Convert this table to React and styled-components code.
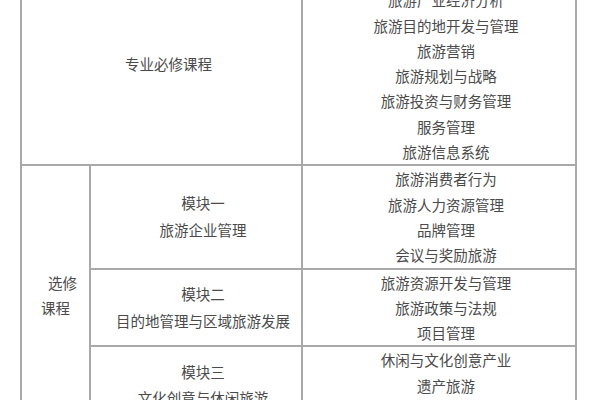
import React from "react";
import styled, { createGlobalStyle } from "styled-components";

const GlobalStyle = createGlobalStyle`
  html, body {
    margin: 0;
    padding: 0;
    background: #fff;
    overflow: hidden;
  }
  body {
    font-family: "Noto Sans CJK SC", "Noto Sans", sans-serif;
  }
`;

const Page = styled.div`
  width: 600px;
  height: 400px;
  overflow: hidden;
  background: #fff;
`;

const Table = styled.table`
  margin: -40px 0 0 20px;
  width: 557px;
  table-layout: fixed;
  border-collapse: collapse;
  border: 2px solid #a9a9a9;
`;

const Cell = styled.td`
  border: 2px solid #a9a9a9;
  padding: 0;
  text-align: center;
  vertical-align: middle;
  color: #4a4a4a;
  font-size: 14.5px;
  line-height: 25.3px;
`;

const Line = styled.p`
  margin: 0;
  text-indent: 14px;
  white-space: nowrap;
  line-height: ${({ $tall }) => ($tall ? "26.5px" : "25.3px")};
`;

const required = [
  "旅游学概论",
  "旅游产业经济分析",
  "旅游目的地开发与管理",
  "旅游营销",
  "旅游规划与战略",
  "旅游投资与财务管理",
  "服务管理",
  "旅游信息系统",
];

const modules = [
  {
    name: "模块一",
    title: "旅游企业管理",
    courses: ["旅游消费者行为", "旅游人力资源管理", "品牌管理", "会议与奖励旅游"],
  },
  {
    name: "模块二",
    title: "目的地管理与区域旅游发展",
    courses: ["旅游资源开发与管理", "旅游政策与法规", "项目管理"],
  },
  {
    name: "模块三",
    title: "文化创意与休闲旅游",
    courses: ["休闲与文化创意产业", "遗产旅游", "节事活动管理"],
  },
];

const App = () => (
  <Page>
    <GlobalStyle />
    <Table>
      <colgroup>
        <col style={{ width: "69px" }} />
        <col style={{ width: "212px" }} />
        <col style={{ width: "274px" }} />
      </colgroup>
      <tbody>
        <tr>
          <Cell colSpan={2}>
            <Line>专业必修课程</Line>
          </Cell>
          <Cell>
            {required.map((c) => (
              <Line key={c}>{c}</Line>
            ))}
          </Cell>
        </tr>
        {modules.map((m, i) => (
          <tr key={m.name}>
            {i === 0 && (
              <Cell rowSpan={modules.length}>
                <Line>
                  选修
                  <br />
                  课程
                </Line>
              </Cell>
            )}
            <Cell>
              <Line $tall>{m.name}</Line>
              <Line $tall>{m.title}</Line>
            </Cell>
            <Cell>
              {m.courses.map((c) => (
                <Line key={c}>{c}</Line>
              ))}
            </Cell>
          </tr>
        ))}
      </tbody>
    </Table>
  </Page>
);

export default App;
